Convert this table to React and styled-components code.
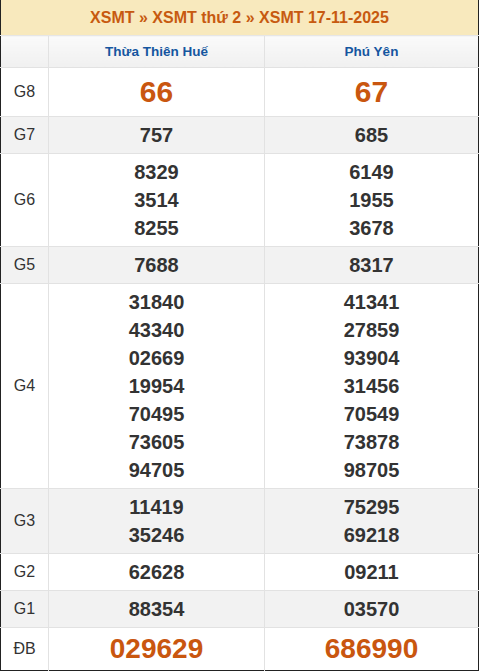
import styled, { createGlobalStyle } from 'styled-components'

const GlobalStyle = createGlobalStyle`
	body {
		margin: 0;
		background: #fff;
		font-family: 'Liberation Sans', Arial, sans-serif;
	}
`

const results = [
	{ label: 'G8', big: true, values: [['66'], ['67']] },
	{ label: 'G7', values: [['757'], ['685']] },
	{ label: 'G6', values: [['8329', '3514', '8255'], ['6149', '1955', '3678']] },
	{ label: 'G5', values: [['7688'], ['8317']] },
	{
		label: 'G4',
		values: [
			['31840', '43340', '02669', '19954', '70495', '73605', '94705'],
			['41341', '27859', '93904', '31456', '70549', '73878', '98705'],
		],
	},
	{ label: 'G3', values: [['11419', '35246'], ['75295', '69218']] },
	{ label: 'G2', values: [['62628'], ['09211']] },
	{ label: 'G1', values: [['88354'], ['03570']] },
	{ label: 'ĐB', special: true, values: [['029629'], ['686990']] },
]

export default function App() {
	return (
		<>
			<GlobalStyle />
			<Table>
				<colgroup>
					<Col $width="48px" />
					<Col $width="216px" />
					<Col />
				</colgroup>
				<thead>
					<tr>
						<Title colSpan={3}>XSMT » XSMT thứ 2 » XSMT 17-11-2025</Title>
					</tr>
					<tr>
						<Province />
						<Province>Thừa Thiên Huế</Province>
						<Province>Phú Yên</Province>
					</tr>
				</thead>
				<tbody>
					{results.map((row, i) => (
						<Row key={row.label} $odd={i % 2 === 1}>
							<Label>{row.label}</Label>
							{row.values.map((list, j) => (
								<Cell key={j}>
									{list.map((n) => (
										<Number key={n} $big={row.big} $special={row.special}>
											{n}
										</Number>
									))}
								</Cell>
							))}
						</Row>
					))}
				</tbody>
			</Table>
		</>
	)
}

const Table = styled.table`
	width: 479px;
	border-collapse: collapse;
	table-layout: fixed;
	border-left: 1px solid #222;
	border-right: 1px solid #222;
	border-bottom: 1px solid #222;
`
const Col = styled.col`
	width: ${(p) => p.$width || 'auto'};
`
const Title = styled.th`
	height: 35px;
	padding: 0;
	background: #f8e9bd;
	color: #c75a10;
	font-size: 16px;
	font-weight: bold;
	text-align: center;
	border-bottom: 1px solid #e6e6e6;
`
const Province = styled.th`
	height: 31px;
	padding: 0;
	background: linear-gradient(#fafafa, #f0f0f0);
	color: #1556a0;
	font-size: 13.5px;
	font-weight: bold;
	text-align: center;
	border-right: 1px solid #e2e2e2;
	&:last-child {
		border-right: none;
	}
`
const Row = styled.tr`
	background: ${(p) => (p.$odd ? '#f2f2f2' : '#fff')};
	td {
		border-top: 1px solid #e2e2e2;
	}
`
const Label = styled.td`
	padding: 0;
	text-align: center;
	color: #333;
	font-size: 16px;
	border-right: 1px solid #e2e2e2;
`
const Cell = styled.td`
	padding: 4px 0;
	text-align: center;
	border-right: 1px solid #e2e2e2;
	&:last-child {
		border-right: none;
	}
`
const Number = styled.div`
	font-weight: bold;
	color: ${(p) => (p.$big || p.$special ? '#c9560f' : '#333')};
	font-size: ${(p) => (p.$big ? '30px' : p.$special ? '28px' : '20px')};
	line-height: ${(p) => (p.$big ? '40px' : p.$special ? '34px' : '28px')};
`
